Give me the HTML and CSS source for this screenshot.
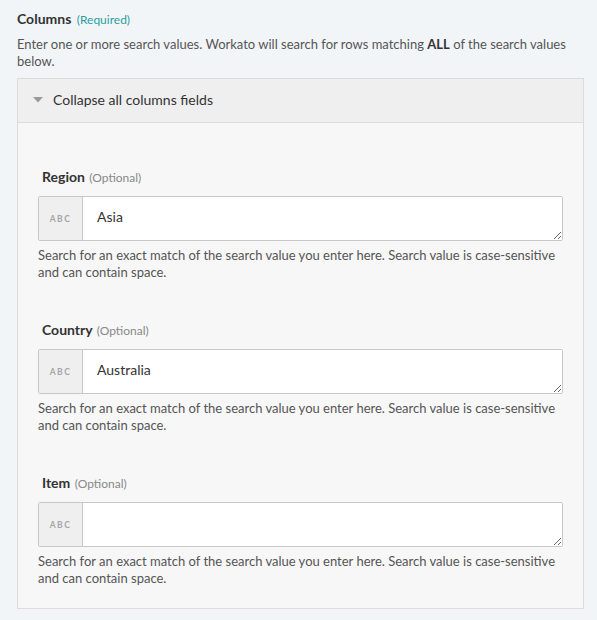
FILE: index.html
```html
<!DOCTYPE html>
<html>
<head>
<meta charset="utf-8">
<link rel="stylesheet" href="styles.css">
</head>
<body>
<div class="wrap">
  <div class="title">Columns <span class="req">(Required)</span></div>
  <div class="desc">Enter one or more search values. Workato will search for rows matching <b>ALL</b> of the search values below.</div>
  <div class="panel">
    <div class="panel-head">
      <svg class="caret" width="10" height="6" viewBox="0 0 10 6"><path d="M0 0 L10 0 L5 5.5 Z" fill="#9a9a9a"/></svg>
      <span>Collapse all columns fields</span>
    </div>
    <div class="panel-body">
      <div class="field">
        <div class="label">Region <span class="opt">(Optional)</span></div>
        <div class="input">
          <div class="prefix">ABC</div>
          <textarea class="value">Asia</textarea>
        </div>
        <div class="hint">Search for an exact match of the search value you enter here. Search value is case-sensitive and can contain space.</div>
      </div>
      <div class="field">
        <div class="label">Country <span class="opt">(Optional)</span></div>
        <div class="input">
          <div class="prefix">ABC</div>
          <textarea class="value">Australia</textarea>
        </div>
        <div class="hint">Search for an exact match of the search value you enter here. Search value is case-sensitive and can contain space.</div>
      </div>
      <div class="field">
        <div class="label">Item <span class="opt">(Optional)</span></div>
        <div class="input">
          <div class="prefix">ABC</div>
          <textarea class="value"></textarea>
        </div>
        <div class="hint">Search for an exact match of the search value you enter here. Search value is case-sensitive and can contain space.</div>
      </div>
    </div>
  </div>
</div>
</body>
</html>
```
FILE: styles.css
```css
html, body {
  margin: 0;
  padding: 0;
  background: #f2f5f8;
  font-family: Lato, "Open Sans", sans-serif;
  color: #333;
}
.wrap {
  padding: 10px 13px 0 17px;
}
.title {
  font-size: 14px;
  font-weight: bold;
  line-height: 17px;
  color: #333;
}
.req {
  font-size: 12px;
  font-weight: normal;
  color: #2a9ea0;
  margin-left: 2px;
}
.desc {
  margin-top: 8px;
  font-size: 13px;
  line-height: 17px;
  color: #555;
}
.desc b {
  color: #333;
}
.panel {
  margin-top: 8px;
  border: 1px solid #dcdcdc;
  background: #f7f7f7;
}
.panel-head {
  height: 44px;
  box-sizing: border-box;
  padding-bottom: 2px;
  background: #efefef;
  border-bottom: 1px solid #dcdcdc;
  display: flex;
  align-items: center;
  padding-left: 15px;
  font-size: 14px;
  color: #333;
}
.caret {
  margin-right: 10px;
  margin-top: 1px;
}
.panel-body {
  padding: 45px 20px 21px 20px;
}
.field + .field {
  margin-top: 40px;
}
.label {
  font-size: 14px;
  font-weight: bold;
  line-height: 17px;
  padding-left: 4px;
  color: #333;
}
.opt {
  font-size: 12px;
  font-weight: normal;
  color: #888;
  margin-left: 1px;
}
.input {
  margin-top: 10px;
  display: flex;
  height: 45px;
  box-sizing: border-box;
  border: 1px solid #c8c8c8;
  border-radius: 2px;
  background: #fff;
}
.prefix {
  width: 43px;
  flex: none;
  background: #efefef;
  border-right: 1px solid #c8c8c8;
  display: flex;
  align-items: center;
  justify-content: center;
  font-size: 8.5px;
  font-weight: bold;
  letter-spacing: 1.5px;
  color: #a5a5a5;
}
.value {
  flex: 1;
  border: none;
  outline: none;
  margin: 0;
  padding: 11px 14px 0 14px;
  font-family: Lato, "Open Sans", sans-serif;
  font-size: 14px;
  line-height: 17px;
  color: #333;
  background: #fff;
  resize: vertical;
  height: 43px;
  box-sizing: border-box;
}
.hint {
  margin-top: 6px;
  font-size: 13px;
  line-height: 17px;
  color: #555;
}
```
